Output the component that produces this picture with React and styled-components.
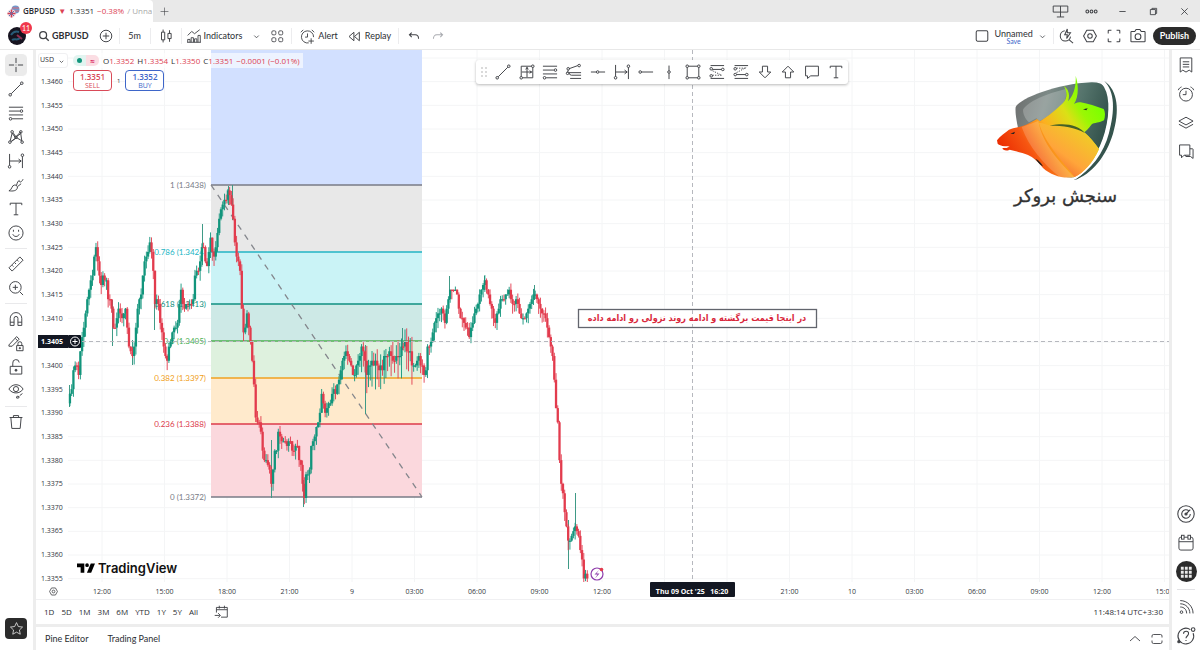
import React, { useState } from "react";
import styled, { createGlobalStyle } from "styled-components";

const ICONS = {
  cross: <path d="M14 3v8M14 17v8M3 14h8M17 14h8M13.5 14h1" />,
  trend: <><path d="M6.5 21.5l15-15" /><circle cx="5" cy="23" r="2" /><circle cx="23" cy="5" r="2" /></>,
  fib: <><path d="M3 5h22M3 11h17M3 17h22M8 23h17" /><circle cx="22.5" cy="11" r="2" /><circle cx="5.5" cy="23" r="2" /></>,
  pattern: <><path d="M5 20L8 8l5 7 8-9 2 14-8-5-9 6M10 8l3 5M7 21l6-5M21 9l-7 5" /><circle cx="4.500" cy="22" r="2" /><circle cx="8" cy="6" r="2" /><circle cx="14" cy="14.500" r="2" /><circle cx="21.500" cy="6" r="2" /><circle cx="23.500" cy="22" r="2" /></>,
  range: <><path d="M4 3v18M24 7v18M4 14h18M18 11l4 3-4 3" /><circle cx="4" cy="23" r="2" /><circle cx="24" cy="5" r="2" /></>,
  brush: <><path d="M3 23c5-1 4-9 9-9 3 0 5 2 4 5-1 4-7 5-13 4zM15 14c1-4 2-6 4-7 0 3 3 4 6-2M17 16l5-4" /></>,
  text: <path d="M5 8V5h18v3M14 5v18M10.500 23h7" />,
  smile: <><circle cx="14" cy="14" r="11" /><path d="M9 16c2 4.500 8 4.500 10 0M10 9v3M18 9v3" /></>,
  ruler: <><path d="M3 20L20 3l5 5L8 25zM8 16l2 2M12 12l2 2M16 8l2 2" /></>,
  zoom: <><circle cx="13" cy="13" r="9" /><path d="M20 20l5 5M13 9v8M9 13h8" /></>,
  magnet: <path d="M5 24V13a9 9 0 0 1 18 0v11h-6V13a3 3 0 0 0-6 0v11zM5 19h6M17 19h6" />,
  pencilLock: <><path d="M3 17L15 4l4 4L8 19H3zM13 7l4 4M15 18h10v8H15zM17 18v-3a3 3 0 0 1 6 0v3" /><circle cx="20" cy="22" r="1" fill="currentColor" /></>,
  unlock: <><path d="M5 13h18v12H5zM9 13V8a5 5 0 0 1 10-1" /><circle cx="14" cy="19" r="1.500" fill="currentColor" /></>,
  eye: <><path d="M3 11c5-9 17-9 22 0-5 8-17 8-22 0z" /><circle cx="14" cy="11" r="4" /><path d="M15 25q-1-3 2-3l2 1q0 3-4 2zM20 21l4-3" /></>,
  trash: <path d="M4 7h20M10 7V4h8v3M6 7l1.500 17h13L22 7" />,
  star: <path d="M14 3l3.400 7.300 7.900 1-5.800 5.500 1.500 7.900-7-3.900-7 3.900 1.500-7.900L2.700 11.300l7.900-1z" />,
  search: <><circle cx="12" cy="12" r="8" /><path d="M18 18l7 7" /></>,
  plusCircle: <><circle cx="14" cy="14" r="9" /><path d="M14 9v10M9 14h10" /></>,
  candles: <path d="M7 8h5v12H7zM9.500 4v4M9.500 20v4M17 10h5v8h-5zM19.500 5v5M19.500 18v5" />,
  indicators: <path d="M3 13l7-7 5 4 9-7M3 25v-5h4v5M9 25v-8h4v8M15 25v-6h4v6M21 25V13h4v12M2 25h24" />,
  layout: <><rect x="5" y="5" width="7" height="7" rx="2" /><rect x="17" y="5" width="7" height="7" rx="2" /><rect x="5" y="17" width="7" height="7" rx="2" /><rect x="17" y="17" width="7" height="7" rx="2" /></>,
  alert: <><path d="M16 24.500A10 10 0 1 1 24 15M14 9v6h-4M3 7l4-4M21 3l4 4M20 17v9M15.500 21.500h9" /></>,
  alarm: <><circle cx="14" cy="15" r="10" /><path d="M14 9v6H9M2 8c1-3 3-4 5-5M26 8c-1-3-3-4-5-5" /></>,
  replay: <path d="M13 7l-8 7 8 7zM22 7l-8 7 8 7z" />,
  undo: <path d="M10 8l-4 4 4 4M6 12h10c4 0 6 3 6 7" />,
  redo: <path d="M18 8l4 4-4 4M22 12H12c-4 0-6 3-6 7" />,
  square: <rect x="5" y="6" width="18" height="16" rx="2" />,
  flashSearch: <><path d="M12 6a8 8 0 1 0 9 9M19 20l6 5M16 3l-4 9h4l-1 6 6-9h-5z" /></>,
  hex: <><path d="M9 5h10l5 9-5 9H9l-5-9z" strokeLinejoin="round" /><circle cx="14" cy="14" r="3.500" /></>,
  full: <path d="M5 10V6q0-1 1-1h4M18 5h4q1 0 1 1v4M23 18v4q0 1-1 1h-4M10 23H6q-1 0-1-1v-4" />,
  camera: <><path d="M4 7h5l2-3h6l2 3h5q1 0 1 1v14q0 1-1 1H4q-1 0-1-1V8q0-1 1-1z" /><circle cx="14" cy="15" r="4.500" /></>,
  bookmark: <path d="M5 3h18v22l-4-3-5 3-5-3-4 3zM9 9h10M9 13h10M9 17h10" />,
  layers: <path d="M14 5l11 6-11 6L3 11zM3 16l11 6 11-6" />,
  chat: <path d="M4 3h16v16h-9l-4 4v-4H4zM20 9h4q1 0 1 1v14l-4-3h-7q-1 0-1-2" />,
  target: <><circle cx="14" cy="14" r="11.500" /><path d="M18 9.500A6 6 0 1 0 20 14" /><path d="M14 14l6-6" /><circle cx="14" cy="14" r="1.500" fill="currentColor" /></>,
  calendar: <><rect x="3" y="5" width="22" height="20" rx="3" /><path d="M3 12h22" /><rect x="7" y="2" width="4" height="6" fill="#fff" /><rect x="17" y="2" width="4" height="6" fill="#fff" /></>,
  dots: <path stroke="none" fill="currentColor" d="M5 5h5v5H5zM12 5h5v5h-5zM19 5h5v5h-5zM5 12h5v5H5zM12 12h5v5h-5zM19 12h5v5h-5zM5 19h5v5H5zM12 19h5v5h-5zM19 19h5v5h-5z" />,
  feed: <><path d="M5 4c11 0 20 9 20 20M5 9c9 0 15 7 15 15M5 14c6 0 10 4 10 10" /><circle cx="7" cy="22" r="2" /></>,
  help: <><path d="M20 5A11 11 0 1 0 24 10M10.500 11c0-5 8-5 7 0 0 3-3.500 3-3.500 6M14 19.500v1.500" /><circle cx="24" cy="5" r="2.500" /><circle cx="4" cy="22" r="1.500" fill="currentColor" /></>,
  gridBox: <><path d="M5 5h16M5 5v16M7 23h16V7M14 6v16M6 14h16M14 7l-2 3M14 7l2 3M21 14l-3-2M21 14l-3 2" /><circle cx="23" cy="5" r="2" /><circle cx="5" cy="23" r="2" /></>,
  fibTrend: <><path d="M6 9l14-5M5 11l-1 4M6 15h19M6 15q1 4 4 4h15M8 24h17" /><circle cx="5" cy="9" r="2" /><circle cx="22" cy="4" r="2" /><circle cx="4" cy="16" r="2" /></>,
  hline: <><path d="M3 14h8M16 14h9" /><circle cx="13.500" cy="14" r="2" /></>,
  ray: <><path d="M7 14h18" /><circle cx="5" cy="14" r="2" /></>,
  vline: <><path d="M14 4v8M14 16v9" /><circle cx="14" cy="14" r="2" /></>,
  rect: <><path d="M7 5h14M7 23h14M5 7v14M23 7v14" /><circle cx="5" cy="5" r="2" /><circle cx="23" cy="5" r="2" /><circle cx="5" cy="23" r="2" /><circle cx="23" cy="23" r="2" /></>,
  longPos: <><path d="M4 4h21M7 10h14M4 24h21" /><path d="M7 12l14 7M7 19h16" strokeDasharray="2 2" /><circle cx="5" cy="9" r="2" /><circle cx="23" cy="10" r="2" /><circle cx="5" cy="20" r="2" /></>,
  shortPos: <><path d="M4 4h21M7 18h14M4 24h21" /><path d="M7 15l15-8M7 8h16" strokeDasharray="2 2" /><circle cx="5" cy="9" r="2" /><circle cx="23" cy="18" r="2" /><circle cx="5" cy="18" r="2" /></>,
  down: <path d="M10 5h8v9h5l-9 9-9-9h5z" />,
  up: <path d="M10 23h8v-9h5l-9-9-9 9h5z" />,
  comment: <path d="M4 5h20v15H12l-5 4v-4H4z" />,
  goto: <path d="M6 15V6h19v17H14M6 10h19M11 3v5M20 3v5M3 20h9M9 16l4 4-4 4" />,
  chevron: <path d="M7 11l7 7 7-7" />,
  chevronUp: <path d="M4 18l10-9 10 9" />,
  panel: <path d="M4 11V8q0-3 3-3h14q3 0 3 3v3M4 17v3q0 3 3 3h14q3 0 3-3v-3" />,
  plus: <path d="M14 4v20M4 14h20" />,
  close: <path d="M6 6l16 16M22 6L6 22" />,
  minimise: <path d="M6 14h16" />,
  restore: <path d="M6 9h13v13H6zM10 9V6h12v13h-3" />,
  screens: <path d="M2 5h24v10H2zM14 5v18M8 23h12" />,
  more: <><circle cx="5" cy="14" r="3" /><circle cx="14" cy="14" r="3" /><circle cx="23" cy="14" r="3" /></>,
};

const Icon = ({ name, size = 18, weight = 1.5 }) => (
  <Svg viewBox="0 0 28 28" $size={size} $weight={weight} aria-hidden="true">
    {ICONS[name]}
  </Svg>
);

const DRAW_TOOLS = [
  ["cross", "trend", "fib", "pattern", "range", "brush", "text", "smile"],
  ["ruler", "zoom"],
  ["magnet", "pencilLock", "unlock", "eye"],
  ["trash"],
];

const FAVOURITES = [
  "trend", "gridBox", "fib", "fibTrend", "hline", "range", "ray", "vline",
  "rect", "longPos", "shortPos", "down", "up", "comment", "text",
];

const RANGES = ["1D", "5D", "1M", "3M", "6M", "YTD", "1Y", "5Y", "All"];

const PRICES = Array.from({ length: 22 }, (_, i) => (1.346 - i * 0.0005).toFixed(4));

const TIMES = [
  "12:00", "15:00", "18:00", "21:00", "9", "03:00", "06:00", "09:00", "12:00",
  "", "", "21:00", "10", "03:00", "06:00", "09:00", "12:00", "15:00",
];

const FIB = [
  { y: 185, label: "1 (1.3438)", line: "#787b86", fill: "#e6e6e6" },
  { y: 252, label: "0.786 (1.3424)", line: "#22b5c4", fill: "#c6f2f5" },
  { y: 304, label: "0.618 (1.3413)", line: "#0f8f80", fill: "#c9e7e4" },
  { y: 341, label: "0.5 (1.3405)", line: "#4caf50", fill: "#dbf0dc" },
  { y: 378, label: "0.382 (1.3397)", line: "#f0a020", fill: "#ffe8c8" },
  { y: 424, label: "0.236 (1.3388)", line: "#dc3a4a", fill: "#fbd5da" },
  { y: 497, label: "0 (1.3372)", line: "#787b86" },
];

// path of the closes: x, y
const PATH = [
  [69, 400], [72, 375], [74, 366], [76, 366], [77, 389], [79, 355], [82, 335], [84, 317], [87, 290],
  [91, 280], [93, 255], [95, 248], [97, 261], [99, 284], [102, 278], [105, 276], [107, 295], [110, 304],
  [112, 328], [115, 330], [117, 314], [122, 314], [124, 305], [126, 325], [128, 347], [132, 350],
  [135, 330], [137, 303], [140, 290], [143, 267], [147, 250], [150, 242], [152, 267], [154, 310],
  [156, 300], [158, 310], [160, 324], [162, 342], [166, 360], [168, 350], [171, 335], [175, 330],
  [178, 312], [180, 295], [182, 310], [186, 304], [188, 308], [192, 300], [194, 280], [197, 275],
  [200, 255], [202, 240], [204, 262], [206, 270], [208, 250], [210, 238], [212, 262], [215, 248],
  [217, 230], [219, 215], [221, 205], [224, 197], [228, 191], [230, 200], [232, 215], [234, 243],
  [237, 260], [239, 272], [241, 310], [243, 341], [245, 313], [248, 330], [251, 355], [253, 385],
  [255, 422], [258, 418], [260, 435], [263, 462], [268, 466], [271, 488], [273, 452], [276, 445],
  [278, 428], [281, 440], [284, 445], [290, 443], [293, 455], [296, 440], [298, 455], [301, 480],
  [303, 497], [305, 480], [308, 470], [310, 450], [313, 437], [317, 420], [319, 415], [321, 390],
  [324, 407], [327, 408], [330, 398], [335, 393], [338, 375], [342, 358], [347, 353], [350, 368],
  [353, 380], [357, 360], [360, 348], [363, 350], [365, 380], [367, 362], [372, 362], [376, 366],
  [381, 370], [384, 352], [390, 358], [397, 358], [402, 345], [406, 347], [410, 353], [412, 370],
  [417, 358], [423, 370], [425, 370], [427, 345], [431, 335], [434, 325], [437, 312], [440, 308],
  [445, 322], [447, 295], [449, 290], [456, 293], [458, 312], [462, 323], [466, 325], [468, 336],
  [471, 320], [475, 313], [478, 300], [481, 287], [484, 282], [488, 295], [491, 315], [494, 326],
  [496, 312], [500, 298], [507, 295], [512, 298], [516, 304], [519, 315], [523, 324], [526, 308],
  [530, 304], [534, 290], [537, 305], [541, 313], [544, 317], [547, 330], [550, 345], [552, 360],
  [554, 395], [556, 425], [558, 430], [559, 483], [562, 495], [565, 520], [568, 550], [571, 535],
  [575, 522], [578, 535], [580, 555], [583, 575], [588, 581],
];

// single bars with a long wick: x, top, bottom
const SPIKES = [
  [69, 385, 407], [112, 300, 346], [132, 340, 365], [154, 300, 330], [202, 224, 265], [228, 186, 205],
  [232, 185, 220], [271, 440, 498], [303, 480, 507], [365, 345, 414], [402, 328, 350], [449, 276, 300],
  [484, 276, 290], [534, 285, 300], [575, 493, 530], [568, 520, 569],
];

const noise = (i) => {
  const v = Math.sin(i * 12.9898) * 43758.5453;
  return v - Math.floor(v);
};

const PIP = 4.733;
const snap = (y) => 81.5 + Math.round((y - 81.5) / PIP) * PIP;

const closeAt = (x) => {
  const n = PATH.findIndex((p) => p[0] >= x);
  if (n < 1) return PATH[0][1];
  const [x0, y0] = PATH[n - 1];
  const [x1, y1] = PATH[n];
  return y0 + ((y1 - y0) * (x - x0)) / (x1 - x0);
};

const CANDLES = [];
let last = snap(402);
for (let i = 0; i < 299; i++) {
  const x = 69 + i * 1.736;
  const close = snap(closeAt(x) + (noise(i) - 0.5) * 9);
  // the sideways stretch after midnight has longer wicks
  const reach = x > 360 && x < 412 ? 24 : 10;
  CANDLES.push({
    x,
    top: Math.min(last, close),
    bottom: Math.max(last, close),
    high: Math.min(last, close) - noise(i + 400) * (reach / 1.5),
    low: Math.max(last, close) + noise(i + 900) * reach,
    up: close < last || (close === last && noise(i + 50) > 0.5),
  });
  last = close;
}

const Chart = () => (
  <ChartSvg role="img" aria-label="GBPUSD 5 minute chart">
    <defs>
      <clipPath id="pane">
        <rect x="68" y="50" width="4000" height="532" />
      </clipPath>
    </defs>
    <g transform="translate(-68 -50)">
      <g stroke="#f4f5f6">
        {TIMES.map((t, i) => (
          <line key={i} x1={102 + i * 62.5} x2={102 + i * 62.5} y1="50" y2="582" />
        ))}
        {Array.from({ length: 23 }, (_, i) => (
          <line key={i} x1="68" x2="4000" y1={58 + i * 23.667} y2={58 + i * 23.667} />
        ))}
      </g>
      <rect x="211" y="50" width="211" height="135" fill="#d0deff" fillOpacity="0.95" />
      {FIB.slice(0, -1).map((f, i) => (
        <rect key={f.y} x="211" y={f.y} width="211" height={FIB[i + 1].y - f.y} fill={f.fill} fillOpacity="0.93" />
      ))}
      {FIB.map((f) => (
        <g key={f.y}>
          <line x1="211" x2="422" y1={f.y} y2={f.y} stroke={f.line} strokeWidth="1.3" />
          <FibText x="206" y={f.y + 3} textAnchor="end" fill={f.line}>{f.label}</FibText>
        </g>
      ))}
      <line x1="211" y1="185" x2="422" y2="497" stroke="#84868c" strokeWidth="1.3" strokeDasharray="6 6" />
      <g clipPath="url(#pane)">
        {SPIKES.map(([x, a, b]) => (
          <line key={x} x1={x + 0.5} x2={x + 0.5} y1={a} y2={b} stroke="#3f9a86" />
        ))}
        {CANDLES.map((c) => (
          <g key={c.x} fill={c.up ? "#12957c" : "#e23b4d"}>
            <rect x={c.x + 0.5} y={c.high} width="0.9" height={c.low - c.high} />
            <rect x={c.x - 0.2} y={c.top} width="2.3" height={Math.max(1.2, c.bottom - c.top)} />
          </g>
        ))}
      </g>
      <g stroke="#b6b8be" strokeDasharray="4 3">
        <line x1="82" x2="4000" y1="341.5" y2="341.5" />
        <line x1="692.5" x2="692.5" y1="50" y2="582" />
      </g>
      <rect x="68" y="335" width="13" height="13" rx="1" fill="#131722" />
      <g stroke="#fff" fill="none">
        <circle cx="75" cy="341.500" r="4.500" />
        <path d="M75 339v5M72.500 341.500h5" />
      </g>
      <rect x="578.500" y="309.500" width="238" height="18" fill="#fff" stroke="#62656d" strokeWidth="1.300" />
      <line x1="692.5" x2="692.5" y1="310" y2="327" stroke="#b6b8be" strokeDasharray="4 3" />
      <Note x="697" y="321" textAnchor="middle" direction="rtl">
        در اینجا قیمت برگشته و ادامه روند نزولی رو ادامه داده
      </Note>
      <circle cx="597" cy="574" r="6" fill="#fff" stroke="#8e3cab" strokeWidth="1.200" />
      <path d="M599 570l-4.500 4.500h3l-2.500 4 4.500-5h-3z" fill="#8e3cab" />
      <circle cx="601.500" cy="569.500" r="1.800" fill="#e23b4d" />
      <g transform="translate(77 559) scale(0.75)">
        <path d="M15.865 8.279a2.452 2.452 0 1 1-4.904 0 2.452 2.452 0 0 1 4.904 0zM9.750 6H0v4.904h4.846v7.269H9.750zM18.346 6H24l-5.106 12.173H13.240z" />
      </g>
      <Wordmark x="98" y="573">TradingView</Wordmark>
      {TIMES.map((t, i) => (
        <AxisText key={i} x={102 + i * 62.5} y="594" textAnchor="middle" fill="#33363d">{t}</AxisText>
      ))}
      <rect x="650" y="582" width="85" height="15" rx="1" fill="#131722" />
      <AxisText x="692" y="594" textAnchor="middle" fill="#fff" fontWeight="700">
        Thu 09 Oct '25{"\u00a0\u00a0\u00a0"}16:20
      </AxisText>
    </g>
  </ChartSvg>
);

const BrokerLogo = () => (
  <BrokerSvg viewBox="40 10 384 408" role="img">
    <defs>
      <linearGradient id="shield" x1="0" x2="1" y1="0" y2="0.3">
        <stop offset="0" stopColor="#6c6c6c" />
        <stop offset="0.35" stopColor="#7d8a87" />
        <stop offset="0.7" stopColor="#54736b" />
        <stop offset="1" stopColor="#35544d" />
      </linearGradient>
      <linearGradient id="beast" gradientUnits="userSpaceOnUse" x1="70" y1="260" x2="340" y2="90">
        <stop offset="0" stopColor="#ea2800" />
        <stop offset="0.250" stopColor="#f65511" />
        <stop offset="0.500" stopColor="#fcb020" />
        <stop offset="0.720" stopColor="#dbe016" />
        <stop offset="0.850" stopColor="#9bf704" />
        <stop offset="1" stopColor="#7fff00" />
      </linearGradient>
      <linearGradient id="body" gradientUnits="userSpaceOnUse" x1="200" y1="320" x2="310" y2="170">
        <stop offset="0" stopColor="#f0502a" />
        <stop offset="0.450" stopColor="#ffa53a" />
        <stop offset="1" stopColor="#efcf25" />
      </linearGradient>
    </defs>
    <path fill="url(#shield)" d="M108 112C118 88 230 42 335 38c40-1 52 18 53 55 1 65-12 108-30 146-24 46-50 74-75 84-60 6-150-60-167-143-6-30-10-53-8-68z" />
    <path fill="#fff" fillOpacity="0.220" d="M130 120c14-24 70-48 128-62 6 24-4 45-22 58-22 18-40 30-56 38l-10-8-22 12c-12-10-18-26-18-38z" />
    <path fill="#35544d" d="M374 34c42 28 46 92 26 158-20 66-62 122-118 140 52-32 90-80 106-142 18-68 18-122-14-156z" />
    <path fill="none" stroke="#fff" strokeWidth="9" d="M368 38c28 30 28 90 12 150-18 66-54 110-96 138" />
    <path fill="url(#beast)" d="M52 212c8-12 24-22 36-32 16-8 40-6 62-20l22-12 9 7c24-15 54-40 69-55 14-15 13-34 2-52 17 12 19 30 13 47 16-15 25-45 23-77 10 32 8 67-5 85 8-4 14-5 20-5 22 3 46 13 69 20 5 8 5 22 1 34-13 8-29 6-38 13-9 12-15 18-21 23 15 14 31 32 44 50-18 42-48 72-73 84-35 6-70-4-95-27-15-20-30-33-45-39-15-6-35-12-55-16-10 5-20 2-22-4l20-4c-13-2-28-4-34-10z" />
    <path fill="url(#body)" d="M178 160c10-2 24 6 34 8 50-5 85 4 104 22 15 12 29 30 42 48-18 42-48 72-73 84-35-46-90-102-107-162z" />
    <path fill="#fff" fillOpacity="0.180" d="M126 172l50-18c12 70 62 120 108 169-12 4-28 3-40 2-52-40-96-92-118-153z" />
    <path fill="#456127" d="M210 168c46-10 86-2 106 22-32-18-62-22-106-22z" />
    <path fill="#222" d="M92 192l14-6-3 7zM310 119l14-3-4 6zM168 267c10 6 18 14 22 23-8-3-16-12-22-23z" />
    <path fill="#fff" d="M66 232l24-3-10 6z" />
    <BrokerName x="412" y="398" direction="rtl">سنجش بروکر</BrokerName>
  </BrokerSvg>
);

const App = () => {
  const [tool, setTool] = useState("cross");

  return (
    <Page>
      <GlobalStyle />
      <TitleBar>
        <BrowserTab>
          <svg width="13" height="13" viewBox="0 0 13 13">
            <circle cx="8.500" cy="4.500" r="4" fill="#7198cc" />
            <path d="M5 3h7M5 6h7" stroke="#dd6974" />
            <circle cx="4.500" cy="8.500" r="4" fill="#f0dbe0" />
            <path d="M4.500 4.500v8M0.500 8.500h8" stroke="#cf4055" strokeWidth="1.500" />
            <path d="M2 6l5 5M7 6l-5 5" stroke="#5b74b4" />
          </svg>
          <strong>GBPUSD</strong>
          <Red>▼</Red>
          <span>1.3351</span>
          <Red>−0.38%</Red>
          <Faded>/ Unna</Faded>
        </BrowserTab>
        <IconButton $w={22} aria-label="New tab"><Icon name="plus" size={11} /></IconButton>
        <Spacer />
        {["screens", "more", "minimise", "restore", "close"].map((n) => (
          <IconButton key={n} $w={31} aria-label={n}>
            <Icon name={n} size={n === "screens" ? 17 : n === "more" ? 13 : 11} weight={n === "screens" ? 1.5 : 2.2} />
          </IconButton>
        ))}
      </TitleBar>

      <Toolbar>
        <Avatar aria-label="Account">
          <svg width="18" height="18" viewBox="0 0 18 18">
            <circle cx="9" cy="9" r="9" fill="#16131f" />
            <path d="M3 8c2-3 5-4 8-3M4 13c3-2 5 1 8-2" stroke="#285c78" strokeWidth="2" fill="none" />
            <path d="M9 8l5 4" stroke="#913052" strokeWidth="2" />
          </svg>
          <Badge>11</Badge>
        </Avatar>
        <ToolButton><Icon name="search" size={12} weight={3} /><strong>GBPUSD</strong></ToolButton>
        <IconButton $w={26} aria-label="Compare"><Icon name="plusCircle" /></IconButton>
        <Divider />
        <IconButton $w={30}>5m</IconButton>
        <Divider />
        <IconButton $w={30} aria-label="Candles"><Icon name="candles" /></IconButton>
        <Divider />
        <ToolButton><Icon name="indicators" size={16} weight={1.6} />Indicators</ToolButton>
        <IconButton $w={20} aria-label="Templates"><Icon name="chevron" size={9} weight={2.5} /></IconButton>
        <IconButton $w={22} aria-label="Layouts"><Icon name="layout" size={16} /></IconButton>
        <Divider $gap />
        <ToolButton><Icon name="alert" size={17} />Alert</ToolButton>
        <ToolButton><Icon name="replay" size={17} weight={1.6} />Replay</ToolButton>
        <Divider $gap />
        <IconButton $w={24} aria-label="Undo"><Icon name="undo" size={16} weight={1.8} /></IconButton>
        <Muted $w={24} aria-label="Redo"><Icon name="redo" size={16} weight={1.8} /></Muted>
        <Spacer />
        <IconButton $w={26} aria-label="Layout"><Icon name="square" weight={1.6} /></IconButton>
        <SaveButton>Unnamed<small>Save</small></SaveButton>
        <IconButton $w={20} aria-label="Manage layouts"><Icon name="chevron" size={9} weight={2.5} /></IconButton>
        <Divider />
        {["flashSearch", "hex", "full", "camera"].map((n) => (
          <IconButton key={n} $w={24} aria-label={n}><Icon name={n} weight={1.6} /></IconButton>
        ))}
        <Publish>Publish</Publish>
      </Toolbar>

      <Body>
        <LeftRail>
          {DRAW_TOOLS.map((group, i) => (
            <RailGroup key={i}>
              {group.map((n) => (
                <RailButton key={n} $active={tool === n} aria-label={n} onClick={() => setTool(n)}>
                  <Icon name={n} />
                </RailButton>
              ))}
            </RailGroup>
          ))}
          <Spacer />
          <StarButton aria-label="Favourites"><Icon name="star" size={15} /></StarButton>
        </LeftRail>

        <Centre>
          <ChartPanel>
            <ChartRow>
              <PriceAxis>
                <Currency>
                  <select aria-label="Currency" defaultValue="USD">
                    <option>USD</option>
                  </select>
                  <Icon name="chevron" size={7} weight={3} />
                </Currency>
                <PriceList>
                  {PRICES.map((p) => (
                    <Price key={p} $current={p === "1.3405"}>{p}</Price>
                  ))}
                </PriceList>
                <AxisSettings aria-label="Axis settings"><Icon name="hex" size={11} weight={2} /></AxisSettings>
              </PriceAxis>
              <Plot>
                <Chart />
                <Legend>
                  <Ohlc>
                    <Status><i />≈</Status>
                    <span>O<Red>1.3352</Red></span>
                    <span>H<Red>1.3354</Red></span>
                    <span>L<Red>1.3350</Red></span>
                    <span>C<Red>1.3351</Red></span>
                    <Red>−0.0001 (−0.01%)</Red>
                  </Ohlc>
                  <Trade>
                    <TradeButton $color="#d94a58"><b>1.3351</b>SELL</TradeButton>
                    <span>1</span>
                    <TradeButton $color="#3e66c9"><b>1.3352</b>BUY</TradeButton>
                  </Trade>
                </Legend>
                <Favourites>
                  <Grip viewBox="0 0 6 10">
                    {[1, 5].map((x) => [1, 5, 9].map((y) => <circle key={`${x}${y}`} cx={x} cy={y} r="0.700" />))}
                  </Grip>
                  {FAVOURITES.map((n) => (
                    <button key={n} aria-label={n}><Icon name={n} /></button>
                  ))}
                </Favourites>
                <BrokerLogo />
              </Plot>
            </ChartRow>
            <RangeBar>
              {RANGES.map((r) => <button key={r}>{r}</button>)}
              <GoTo aria-label="Go to date"><Icon name="goto" size={16} weight={1.6} /></GoTo>
              <Spacer />
              <span>11:48:14 UTC+3:30</span>
            </RangeBar>
          </ChartPanel>
          <BottomPanel>
            <button>Pine Editor</button>
            <button>Trading Panel</button>
            <Spacer />
            <IconButton $w={22} aria-label="Open panel"><Icon name="chevronUp" size={14} weight={1.8} /></IconButton>
            <IconButton $w={22} aria-label="Maximise panel"><Icon name="panel" size={14} weight={1.8} /></IconButton>
          </BottomPanel>
        </Centre>

        <RightRail>
          {["bookmark", "alarm", "layers", "chat"].map((n) => (
            <SideButton key={n} aria-label={n}><Icon name={n} /></SideButton>
          ))}
          <Spacer />
          <SideButton aria-label="Screeners"><Icon name="target" size={20} /></SideButton>
          <SideButton aria-label="Calendar"><Icon name="calendar" /></SideButton>
          <SideButton aria-label="Products"><Disc><Icon name="dots" size={16} /></Disc></SideButton>
          <RailRule />
          <SideButton aria-label="Feed"><Icon name="feed" /></SideButton>
          <SideButton aria-label="Help"><Icon name="help" size={20} /></SideButton>
        </RightRail>
      </Body>
    </Page>
  );
};

const GlobalStyle = createGlobalStyle`
  * {
    box-sizing: border-box;
  }
  body {
    margin: 0;
    background: #ededed;
    color: #2c2e33;
    font-family: Lato, "Open Sans", sans-serif;
    font-size: 9px;
    line-height: 12px;
  }
  button, select {
    font: inherit;
    color: inherit;
    background: none;
    border: 0;
    padding: 0;
    cursor: pointer;
  }
`;

const Page = styled.div`
  height: 100vh;
  min-height: 560px;
  display: flex;
  flex-direction: column;
`;

const Svg = styled.svg`
  width: ${(props) => props.$size}px;
  height: ${(props) => props.$size}px;
  flex: none;
  fill: none;
  stroke: currentColor;
  stroke-width: ${(props) => props.$weight};
  opacity: 0.9;
`;

const Spacer = styled.div`
  flex: 1;
`;

const Red = styled.span`
  color: #dc4253;
`;

const TitleBar = styled.header`
  height: 22px;
  flex: none;
  display: flex;
  background: #e9e9e9;
`;

const BrowserTab = styled.div`
  width: 153px;
  padding: 0 2px 0 7px;
  display: flex;
  align-items: center;
  gap: 3px;
  background: #fff;
  border-radius: 0 4px 0 0;
  font-family: "Open Sans", sans-serif;
  font-size: 8px;
  white-space: nowrap;
  strong {
    font-weight: 600;
  }
  svg {
    flex: none;
  }
`;

const Faded = styled.span`
  color: #a9a9a9;
`;

const IconButton = styled.button`
  width: ${(props) => props.$w}px;
  display: flex;
  align-items: center;
  justify-content: center;
`;

const Muted = styled(IconButton)`
  color: #a0a2a8;
`;

const Toolbar = styled.div`
  height: 28px;
  flex: none;
  display: flex;
  align-items: center;
  padding: 1px 4px 0 8px;
  background: #fff;
  border-bottom: 1px solid #e8e8e8;
`;

const Avatar = styled.button`
  position: relative;
  width: 18px;
  height: 18px;
  margin-right: 8px;
`;

const Badge = styled.span`
  position: absolute;
  top: -5px;
  right: -6px;
  width: 12px;
  height: 12px;
  border-radius: 50%;
  background: #f0384c;
  color: #fff;
  font-size: 7px;
`;

const ToolButton = styled.button`
  display: flex;
  align-items: center;
  gap: 2px;
  padding: 0 4px;
  strong {
    font-weight: 700;
  }
`;

const Divider = styled.i`
  width: 1px;
  height: 16px;
  margin: 0 ${(props) => (props.$gap ? 3 : 0)}px;
  background: #ececee;
`;

const SaveButton = styled.button`
  line-height: 9px;
  small {
    display: block;
    font-size: 7px;
    line-height: 6px;
    color: #3e66c9;
  }
`;

const Publish = styled.button`
  height: 18px;
  margin-left: 3px;
  padding: 0 7px;
  border-radius: 9px;
  background: #2b2b2b;
  color: #fff;
  font-weight: 700;
`;

const Body = styled.div`
  flex: 1;
  min-height: 0;
  display: flex;
  gap: 3px;
`;

const LeftRail = styled.nav`
  width: 33px;
  padding: 3px 1px 11px 0;
  display: flex;
  flex-direction: column;
  align-items: center;
  background: #fff;
`;

const RailGroup = styled.div`
  & + & {
    margin-top: 3px;
    padding-top: 3px;
    border-top: 1px solid #e9e9eb;
  }
`;

const RailButton = styled.button`
  width: 22px;
  height: 24px;
  display: flex;
  align-items: center;
  justify-content: center;
  border: solid #fff;
  border-width: 1px 0;
  border-radius: 5px;
  background: ${(props) => (props.$active ? "#ebebeb" : "#fff")};
`;

const StarButton = styled.button`
  width: 22px;
  height: 21px;
  display: grid;
  place-items: center;
  border-radius: 4px;
  background: #2b2b2b;
  color: #fff;
`;

const Centre = styled.main`
  flex: 1;
  min-width: 0;
  display: flex;
  flex-direction: column;
  gap: 3px;
`;

const ChartPanel = styled.section`
  flex: 1;
  min-height: 0;
  display: flex;
  flex-direction: column;
  background: #fff;
`;

const ChartRow = styled.div`
  flex: 1;
  min-height: 0;
  display: flex;
`;

const PriceAxis = styled.div`
  width: 32px;
  padding: 3px 0 2px 2px;
  display: flex;
  flex-direction: column;
  font-family: "Open Sans", sans-serif;
`;

const Currency = styled.label`
  position: relative;
  height: 15px;
  border: 1px solid #f0f0f2;
  border-radius: 3px;
  select {
    width: 100%;
    padding-left: 1px;
    appearance: none;
    font-size: 7px;
    line-height: 12px;
    display: block;
  }
  svg {
    position: absolute;
    right: 2px;
    top: 4px;
    pointer-events: none;
  }
`;

const PriceList = styled.ol`
  flex: 1;
  margin: 7px 0 0;
  padding: 0;
  display: flex;
  flex-direction: column;
  justify-content: space-between;
  list-style: none;
  font-size: 7px;
`;

const Price = styled.li`
  height: 13px;
  padding-left: 3px;
  line-height: 13px;
  color: ${(props) => (props.$current ? "#fff" : "#33363d")};
  background: ${(props) => (props.$current ? "#131722" : "none")};
  font-weight: ${(props) => (props.$current ? 700 : 400)};
`;

const AxisSettings = styled.button`
  height: 12px;
  display: grid;
  place-items: center;
`;

const Plot = styled.div`
  position: relative;
  flex: 1;
  min-width: 0;
  overflow: hidden;
`;

const ChartSvg = styled.svg`
  display: block;
  width: 100%;
  height: 100%;
`;

const AxisText = styled.text`
  font-family: "Open Sans", sans-serif;
  font-size: 7px;
`;

const FibText = styled.text`
  font-family: Lato, "Open Sans", sans-serif;
  font-size: 8px;
`;

const Note = styled.text`
  font-family: "DejaVu Sans Condensed", "DejaVu Sans", sans-serif;
  font-size: 9px;
  font-weight: 700;
  fill: #d9283c;
`;

const Wordmark = styled.text`
  font-family: Inter, "Open Sans", sans-serif;
  font-size: 13px;
  font-weight: 600;
  fill: #111;
`;

const BrokerSvg = styled.svg`
  position: absolute;
  top: 23px;
  right: 48px;
  width: 128px;
  height: 136px;
  overflow: visible;
`;

const BrokerName = styled.text`
  font-family: "DejaVu Sans", sans-serif;
  font-size: 54px;
  fill: #333;
  stroke: #333;
  stroke-width: 1;
`;

const Legend = styled.div`
  position: absolute;
  top: 3px;
  left: 5px;
  font-family: "Open Sans", sans-serif;
  font-size: 8px;
`;

const Ohlc = styled.div`
  height: 15px;
  padding-right: 3px;
  display: flex;
  align-items: center;
  gap: 3px;
  background: rgba(255, 255, 255, 0.6);
`;

const Status = styled.span`
  width: 26px;
  height: 11px;
  margin-right: 1px;
  display: flex;
  align-items: center;
  justify-content: space-around;
  border-radius: 5px;
  background: linear-gradient(90deg, #e2f4f0 50%, #fbdde3 50%);
  color: #dc2f68;
  font-weight: 700;
  i {
    width: 5px;
    height: 5px;
    border-radius: 50%;
    background: #12957c;
  }
`;

const Trade = styled.div`
  margin-top: 2px;
  display: flex;
  align-items: center;
  gap: 5px;
  font-size: 6px;
`;

const TradeButton = styled.button`
  width: 39px;
  height: 21px;
  display: flex;
  flex-direction: column;
  align-items: center;
  justify-content: center;
  border: 1px solid ${(props) => props.$color};
  border-radius: 4px;
  background: #fff;
  color: ${(props) => props.$color};
  font-size: 7px;
  line-height: 9px;
  b {
    font-size: 8px;
    font-weight: 600;
  }
`;

const Favourites = styled.div`
  position: absolute;
  top: 10px;
  left: 408px;
  width: 372px;
  height: 24px;
  display: flex;
  align-items: center;
  background: #fff;
  border-radius: 3px;
  box-shadow: 0 1px 3px rgba(0, 0, 0, 0.28);
  button {
    flex: 1;
    height: 24px;
    display: grid;
    place-items: center;
  }
`;

const Grip = styled.svg`
  width: 6px;
  height: 10px;
  margin: 0 4px 0 5px;
  fill: #999;
`;

const RangeBar = styled.div`
  height: 25px;
  flex: none;
  padding: 0 6px 0 8px;
  display: flex;
  align-items: center;
  gap: 7px;
  border-top: 1px solid #f0f0f2;
  font-family: "Open Sans", sans-serif;
  font-size: 8px;
`;

const GoTo = styled.button`
  margin-left: 8px;
  height: 16px;
`;

const BottomPanel = styled.section`
  height: 23px;
  flex: none;
  padding: 0 1px 0 9px;
  display: flex;
  align-items: center;
  background: #fff;
  > button:nth-child(2) {
    margin-left: 19px;
  }
`;

const RightRail = styled.aside`
  width: 28px;
  display: flex;
  flex-direction: column;
  align-items: center;
  background: #fff;
`;

const SideButton = styled.button`
  width: 24px;
  height: 29px;
  display: grid;
  place-items: center;
`;

const Disc = styled.span`
  width: 21px;
  height: 21px;
  display: grid;
  place-items: center;
  border-radius: 50%;
  background: #2b2b2b;
  color: #fff;
`;

const RailRule = styled.i`
  width: 18px;
  height: 1px;
  margin: 3px 0 2px;
  background: #e2e2e5;
`;

export default App;
